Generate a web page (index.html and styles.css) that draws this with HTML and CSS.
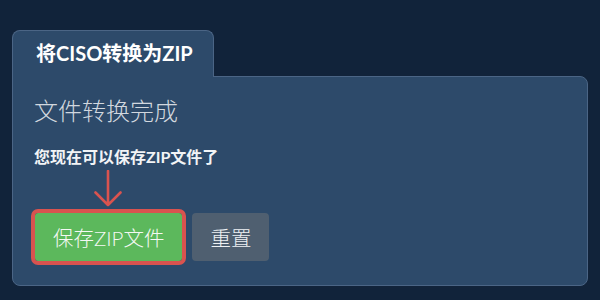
FILE: index.html
```html
<!DOCTYPE html>
<html lang="zh">
<head>
<meta charset="utf-8">
<title>将CISO转换为ZIP</title>
<link rel="stylesheet" href="styles.css">
</head>
<body>
<div class="page">
  <div class="card">
    <div class="tab">将CISO转换为ZIP</div>
    <div class="panel">
      <h2 class="heading">文件转换完成</h2>
      <p class="note">您现在可以保存ZIP文件了</p>
      <div class="actions">
        <div class="primary-wrap">
          <svg class="arrow" width="30" height="38" viewBox="0 0 30 38" aria-hidden="true">
            <path d="M15 1 V35 M2.5 22.5 L15 35 L27.5 22.5" fill="none" stroke="#d9534f" stroke-width="2.6" stroke-linecap="round" stroke-linejoin="round"/>
          </svg>
          <button class="btn btn-save">保存ZIP文件</button>
        </div>
        <button class="btn btn-reset">重置</button>
      </div>
    </div>
  </div>
</div>
</body>
</html>
```
FILE: styles.css
```css
* { box-sizing: border-box; }
html, body { margin: 0; padding: 0; }
body {
  background: #11233a;
  font-family: Lato, "Noto Sans CJK SC", sans-serif;
  width: 600px;
  height: 300px;
  overflow: hidden;
}
.page {
  padding: 30px 12px 0 12px;
}
.card {
  display: flex;
  flex-direction: column;
  align-items: flex-start;
}
.tab {
  position: relative;
  z-index: 1;
  width: 202px;
  height: 47px;
  margin-bottom: -1px;
  padding: 0 0 0 23px;
  background: #2d4a6a;
  border: 1px solid #4b6585;
  border-bottom: none;
  border-radius: 8px 8px 0 0;
  color: #ffffff;
  font-size: 20px;
  font-weight: 700;
  line-height: 45px;
  white-space: nowrap;
}
.panel {
  align-self: stretch;
  background: #2d4a6a;
  border: 1px solid #4b6585;
  border-radius: 0 8px 8px 8px;
  padding: 18px 21px 23px 21px;
  height: 210px;
}
.heading {
  margin: 0;
  font-size: 24px;
  font-weight: 300;
  line-height: 32px;
  color: #d2d8df;
}
.note {
  margin: 20px 0 0 0;
  font-size: 16px;
  font-weight: 700;
  line-height: 20px;
  color: #f2f4f6;
}
.actions {
  display: flex;
  align-items: flex-end;
  gap: 10px;
  margin-top: 3px;
}
.primary-wrap {
  display: flex;
  flex-direction: column;
  align-items: center;
}
.arrow {
  display: block;
  margin-bottom: 5px;
}
.btn {
  height: 48px;
  border: none;
  border-radius: 4px;
  font-family: Lato, "Noto Sans CJK SC", sans-serif;
  font-size: 20.5px;
  font-weight: 300;
  color: #f4f8f4;
  padding: 0 18px;
  cursor: pointer;
}
.btn-save {
  background: #5cb85c;
  outline: 4px solid #d9534f;
  border-radius: 3px;
  margin-left: 1px;
}
.btn-reset {
  background: #4f5f70;
  color: #eef1f4;
}
```
